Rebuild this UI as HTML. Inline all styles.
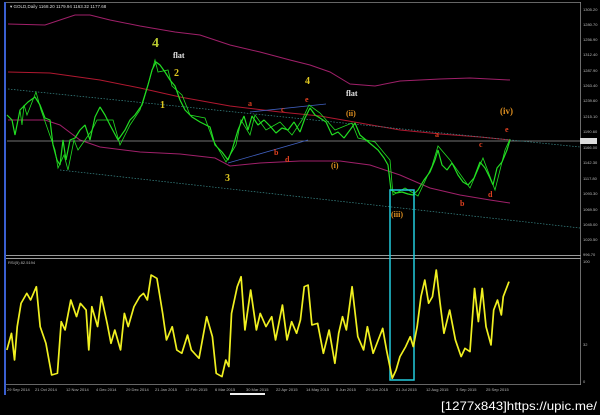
<!DOCTYPE html>
<html><head><meta charset="utf-8"><style>
html,body{margin:0;padding:0;background:#000;width:600px;height:415px;overflow:hidden}
svg{display:block}
text{font-family:"Liberation Sans",sans-serif}
.ax{font-size:4px;fill:#bbb}
.w{font-family:"Liberation Serif",serif;font-weight:bold}
</style></head><body>
<svg width="600" height="415" viewBox="0 0 600 415" xmlns="http://www.w3.org/2000/svg">
<rect width="600" height="415" fill="#000"/>
<rect x="4" y="2" width="2" height="393" fill="#3a5fd0"/>
<line x1="6" y1="2.5" x2="581" y2="2.5" stroke="#888" stroke-width="0.8"/>
<line x1="580.5" y1="2" x2="580.5" y2="385" stroke="#888" stroke-width="0.8"/>
<line x1="6" y1="255.5" x2="581" y2="255.5" stroke="#999" stroke-width="1"/>
<line x1="6" y1="258.5" x2="581" y2="258.5" stroke="#999" stroke-width="1"/>
<line x1="6" y1="384.5" x2="581" y2="384.5" stroke="#888" stroke-width="0.8"/>
<text x="10" y="8" font-size="4.5" fill="#ddd">▾ GOLD,Daily  1168.20 1179.94 1163.32 1177.68</text>
<polyline fill="none" stroke="#a0206a" stroke-width="1" points="8,24 45,25 60,20 75,15 90,15 110,20 140,26 175,32 200,35 230,45 260,52 290,60 310,65 330,72 350,84 375,86 400,81 440,79 470,78 510,80"/>
<polyline fill="none" stroke="#b01830" stroke-width="1" points="8,72 50,73 100,80 140,88 180,97 230,106 280,112 320,116 360,123 400,130 440,134 480,137 510,140"/>
<polyline fill="none" stroke="#a0206a" stroke-width="1" points="8,120 45,120 60,125 80,140 100,147 140,152 180,154 215,158 230,166 260,163 300,161 340,161 370,165 400,175 430,188 460,195 490,200 510,203"/>
<line x1="7" y1="141" x2="580" y2="141" stroke="#999" stroke-width="0.7"/>
<rect x="580" y="138" width="17" height="6" fill="#ddd"/>
<line x1="8" y1="89" x2="580" y2="147" stroke="#3a8a8a" stroke-width="0.7" stroke-dasharray="1.5,1.5"/>
<line x1="60" y1="170" x2="580" y2="228" stroke="#3a8a8a" stroke-width="0.7" stroke-dasharray="1.5,1.5"/>
<line x1="228" y1="163" x2="308" y2="140" stroke="#4060c0" stroke-width="0.8"/>
<line x1="250" y1="112" x2="326" y2="104" stroke="#4060c0" stroke-width="0.8"/>
<polyline fill="none" stroke="#22dd22" stroke-width="1.2" stroke-linejoin="bevel" points="7,115 12,120 15,135 20,110 28,102 35,97 40,105 45,118 50,120 53,145 57,160 60,165 63,140 66,160 70,140 75,138 80,130 85,125 90,140 95,117 100,107 105,115 110,125 118,140 125,130 130,120 135,115 142,105 148,85 152,70 156,62 160,65 165,72 170,80 175,86 180,100 185,110 192,117 200,122 210,127 215,145 222,152 228,160 232,150 238,130 244,116 248,130 252,116 258,125 264,120 270,126 276,133 282,128 288,130 294,122 300,132 305,118 310,108 315,115 320,118 326,122 332,135 338,132 344,138 350,130 355,123 360,135 366,140 372,145 378,150 384,158 388,165 391,190 396,193 402,192 408,194 413,195 418,190 424,180 430,172 435,160 438,150 442,165 447,170 452,163 458,175 463,182 468,185 474,178 480,162 485,168 490,178 493,185 497,168 502,162 507,150 510,140"/>
<polyline fill="none" stroke="#22dd22" stroke-width="0.8" points="20,110 22,125 24,105 27,115 36,92 41,110 55,150 58,168 64,155 68,170 74,140 78,150 92,130 97,120 113,120 120,145 130,125 140,110 150,78 155,60 158,72 168,70 172,86 182,95 190,115 205,118 213,140 226,162 236,145 241,120 250,135 255,115 266,130 280,122 292,135 302,120 309,105 320,113 335,130 352,123 358,138 375,142 390,160 393,195 405,188 418,196 432,166 438,146 450,160 470,188 483,158 495,190 505,150 510,139"/>
<rect x="390" y="190" width="24" height="190" fill="none" stroke="#22ccdd" stroke-width="1.5"/>
<text x="152" y="47" class="w" font-size="14" fill="#b8c830">4</text>
<text x="173" y="58" class="w" font-size="8" fill="#e8e8e8">flat</text>
<text x="174" y="76" class="w" font-size="10" fill="#e0c820">2</text>
<text x="160" y="108" class="w" font-size="10" fill="#e0c820">1</text>
<text x="225" y="181" class="w" font-size="10" fill="#e0c820">3</text>
<text x="248" y="106" class="w" font-size="8" fill="#e04020">a</text>
<text x="281" y="112" class="w" font-size="8" fill="#e04020">c</text>
<text x="305" y="102" class="w" font-size="8" fill="#e04020">e</text>
<text x="274" y="155" class="w" font-size="8" fill="#e04020">b</text>
<text x="285" y="162" class="w" font-size="8" fill="#e04020">d</text>
<text x="305" y="84" class="w" font-size="10" fill="#e0c820">4</text>
<text x="346" y="96" class="w" font-size="8" fill="#e8e8e8">flat</text>
<text x="346" y="116" class="w" font-size="8" fill="#e09020">(ii)</text>
<text x="331" y="168" class="w" font-size="8" fill="#e09020">(i)</text>
<text x="391" y="217" class="w" font-size="8" fill="#e09020">(iii)</text>
<text x="435" y="137" class="w" font-size="8" fill="#e04020">a</text>
<text x="479" y="147" class="w" font-size="8" fill="#e04020">c</text>
<text x="505" y="132" class="w" font-size="8" fill="#e04020">e</text>
<text x="500" y="114" class="w" font-size="9" fill="#e09020">(iv)</text>
<text x="460" y="206" class="w" font-size="8" fill="#e04020">b</text>
<text x="488" y="197" class="w" font-size="8" fill="#e04020">d</text>
<g class="ax">
<text x="583" y="11">1305.20</text><text x="583" y="26">1280.70</text><text x="583" y="41">1256.90</text><text x="583" y="56">1312.40</text><text x="583" y="72">1287.90</text><text x="583" y="87">1263.40</text><text x="583" y="102">1239.60</text><text x="583" y="118">1215.10</text><text x="583" y="133">1190.60</text><text x="583" y="149">1166.00</text><text x="583" y="164">1142.30</text><text x="583" y="180">1117.80</text><text x="583" y="195">1093.30</text><text x="583" y="211">1069.50</text><text x="583" y="226">1045.00</text><text x="583" y="241">1020.50</text><text x="583" y="256">996.70</text>
<text x="583" y="263">100</text><text x="583" y="346">32</text><text x="583" y="383">0</text>
<text x="8" y="264">RSI(5) 82.5194</text>
</g>
<g transform="translate(0,250) scale(0.3827,0.3333)">
<polyline fill="none" stroke="#f0f020" stroke-width="4.5" stroke-linejoin="round" points="18,300 30,250 38,330 45,230 55,160 70,130 80,150 95,110 105,230 120,280 135,375 150,370 160,215 170,240 185,150 200,200 210,160 225,180 232,300 240,170 255,230 265,140 280,220 290,280 300,240 315,300 325,190 335,230 350,170 365,140 375,130 385,150 395,75 410,85 425,190 435,270 450,230 462,300 475,310 490,255 500,300 520,325 540,200 555,260 565,370 580,380 590,330 598,350 605,190 620,110 630,80 640,240 655,120 670,240 680,190 695,230 710,200 720,270 738,165 750,270 762,215 775,250 785,210 795,110 805,105 815,225 830,220 845,310 860,240 875,340 885,250 895,200 905,240 920,110 935,260 950,300 960,230 975,310 985,280 1000,235 1010,300 1025,385 1035,360 1045,320 1060,290 1072,260 1080,290 1090,230 1100,140 1110,90 1120,160 1130,140 1140,60 1150,160 1160,250 1175,180 1190,270 1205,320 1215,295 1228,305 1240,115 1250,215 1260,115 1270,230 1283,285 1290,180 1300,150 1310,195 1315,140 1330,95"/>
</g>
<g class="ax">
<text x="7" y="391">29 Sep 2014</text><text x="35" y="391">21 Oct 2014</text><text x="66" y="391">12 Nov 2014</text><text x="96" y="391">4 Dec 2014</text><text x="126" y="391">29 Dec 2014</text><text x="155" y="391">21 Jan 2015</text><text x="185" y="391">12 Feb 2015</text><text x="215" y="391">6 Mar 2015</text><text x="246" y="391">30 Mar 2015</text><text x="276" y="391">22 Apr 2015</text><text x="306" y="391">14 May 2015</text><text x="336" y="391">5 Jun 2015</text><text x="366" y="391">29 Jun 2015</text><text x="396" y="391">21 Jul 2015</text><text x="426" y="391">12 Aug 2015</text><text x="456" y="391">3 Sep 2015</text><text x="486" y="391">25 Sep 2015</text>
</g>
<rect x="230" y="393" width="35" height="2" fill="#eee"/>
<text x="441" y="410" font-family="Liberation Sans Narrow,Liberation Sans,sans-serif" font-size="12" fill="#fff" textLength="156" lengthAdjust="spacingAndGlyphs">[1277x843]https://upic.me/</text>
</svg>
</body></html>
